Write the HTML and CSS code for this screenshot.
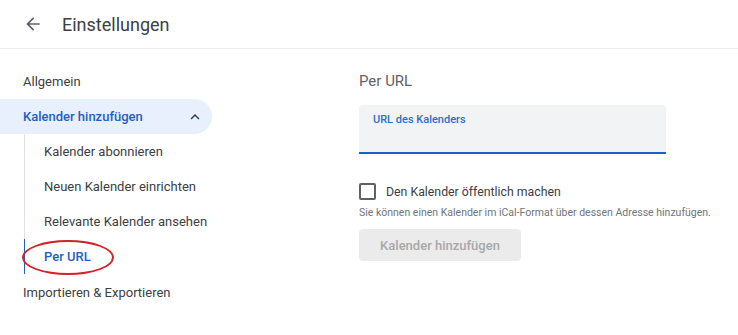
FILE: index.html
```html
<!DOCTYPE html>
<html lang="de">
  <head>
    <title>Einstellungen</title>
    <meta charset="utf-8" />
    <meta name="viewport" content="width=device-width, initial-scale=1" />

    <link rel="stylesheet" href="styles.css">
  </head>

  <body>
    <header class="topbar">
      <button class="back" aria-label="Zurück">
        <svg width="20" height="20" viewBox="0 0 24 24">
          <path d="M20 11H7.83l5.59-5.59L12 4l-8 8 8 8 1.41-1.41L7.83 13H20v-2z" fill="#5f6368" />
        </svg>
      </button>
      <h1>Einstellungen</h1>
    </header>

    <div class="layout">
      <nav class="sidebar">
        <div class="item">Allgemein</div>
        <div class="item active">
          <span>Kalender hinzufügen</span>
          <svg class="chevron" width="18" height="18" viewBox="0 0 24 24">
            <path d="M7.41 15.41L12 10.83l4.59 4.58L18 14l-6-6-6 6z" fill="#1f3b6b" />
          </svg>
        </div>
        <div class="sub">
          <div class="item">Kalender abonnieren</div>
          <div class="item">Neuen Kalender einrichten</div>
          <div class="item">Relevante Kalender ansehen</div>
          <div class="item current">
            Per URL
            <span class="circle"></span>
          </div>
        </div>
        <div class="item">Importieren &amp; Exportieren</div>
      </nav>

      <main class="content">
        <h2>Per URL</h2>

        <div class="field">
          <label for="url">URL des Kalenders</label>
          <input type="text" id="url" />
        </div>

        <label class="check">
          <span class="box"></span>
          Den Kalender öffentlich machen
        </label>
        <p class="hint">Sie können einen Kalender im iCal-Format über dessen Adresse hinzufügen.</p>

        <button class="add" disabled>Kalender hinzufügen</button>
      </main>
    </div>
  </body>
</html>
```

FILE: styles.css
```css
body {
  margin: 0;
  font-family: Roboto, "Liberation Sans", sans-serif;
  color: #3c4043;
  background: #fff;
}

.topbar {
  display: flex;
  align-items: center;
  height: 48px;
  border-bottom: 1px solid #ececec;
}

.back {
  border: none;
  background: none;
  padding: 0;
  margin: 0 0 0 23px;
  width: 20px;
  height: 20px;
}

.topbar h1 {
  margin: 0 0 0 19px;
  font-size: 18px;
  font-weight: 400;
  color: #3c4043;
}

.layout {
  display: flex;
  padding-top: 15px;
}

.sidebar {
  width: 212px;
  font-size: 13px;
}

.item {
  position: relative;
  display: flex;
  align-items: center;
  height: 35px;
  padding-left: 23px;
}

.active {
  justify-content: space-between;
  padding-right: 8px;
  background: #e8f0fe;
  border-radius: 0 18px 18px 0;
  color: #1f5fbf;
  font-weight: 500;
}

.sub {
  margin-left: 24px;
  border-left: 1px solid #e0e0e0;
  margin-bottom: 1px;
}

.sub .item {
  padding-left: 19px;
}

.sub .current {
  color: #1f5fbf;
  font-weight: 500;
  border-left: 1px solid #1f5fbf;
  margin-left: -1px;
}

.circle {
  position: absolute;
  left: -3px;
  top: 1px;
  width: 88px;
  height: 31px;
  border: 2px solid #d2222a;
  border-radius: 50%;
}

.content {
  margin-left: 147px;
}

.content h2 {
  margin: 0;
  height: 35px;
  line-height: 35px;
  font-size: 15px;
  font-weight: 400;
  color: #5f6368;
}

.field {
  display: flex;
  flex-direction: column;
  width: 307px;
  height: 47px;
  margin-top: 6px;
  background: #f1f3f4;
  border-bottom: 2px solid #1a62c9;
  border-radius: 4px 4px 0 0;
}

.field label {
  padding: 8px 0 0 14px;
  font-size: 11px;
  font-weight: 500;
  color: #2f6fc9;
}

.field input {
  border: none;
  background: transparent;
  outline: none;
  margin: 4px 14px 0;
}

.check {
  display: flex;
  align-items: center;
  gap: 10px;
  margin-top: 29px;
  font-size: 12.3px;
  color: #3c4043;
}

.box {
  width: 13px;
  height: 13px;
  border: 2px solid #5f6368;
  border-radius: 2px;
}

.hint {
  margin: 6px 0 0;
  font-size: 10.5px;
  color: #70757a;
}

.add {
  margin-top: 10px;
  width: 162px;
  height: 32px;
  border: none;
  border-radius: 4px;
  background: #ebebeb;
  color: #a8a8a8;
  font-family: Roboto, "Liberation Sans", sans-serif;
  font-size: 13px;
  font-weight: 500;
}
```
